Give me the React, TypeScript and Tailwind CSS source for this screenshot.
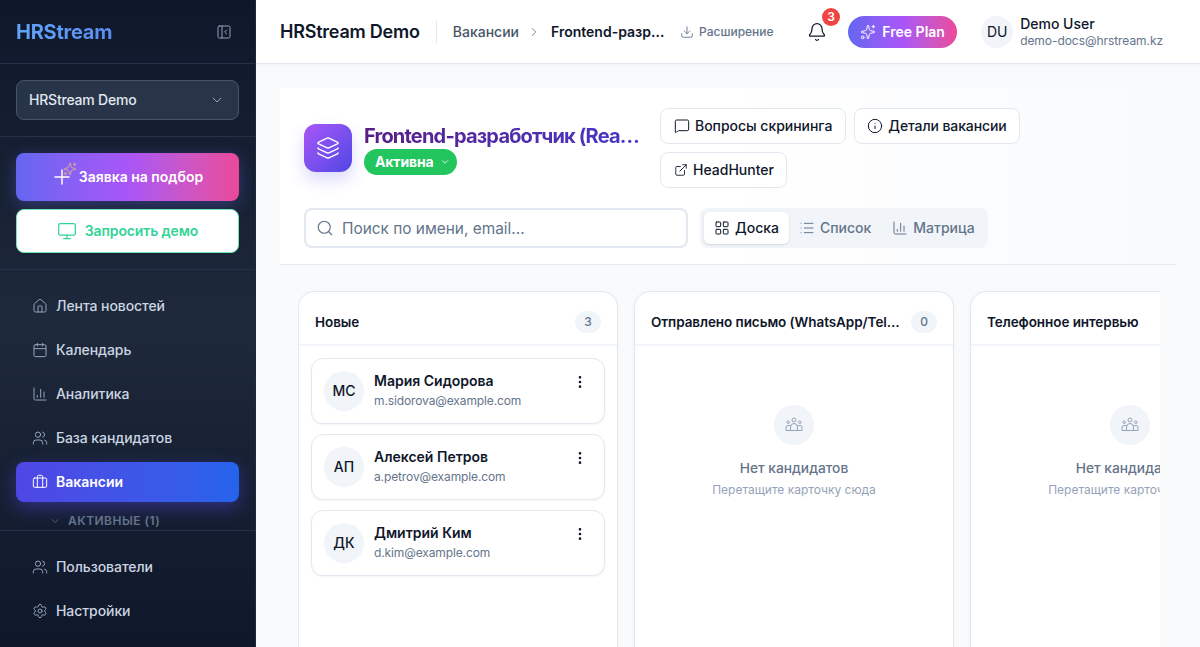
import React from "react";
import {
  PanelLeftClose, ChevronDown, ChevronRight, Plus, Sparkles, Monitor, House, Calendar, ChartColumn, Users, Briefcase, Settings,
  Download, Bell, Layers, MessageSquare, Info, ExternalLink, Search, LayoutGrid, List, MoreVertical,
} from "lucide-react";

const navTop = [
  { label: "Лента новостей", Icon: House },
  { label: "Календарь", Icon: Calendar },
  { label: "Аналитика", Icon: ChartColumn },
  { label: "База кандидатов", Icon: Users },
];

function NavItem({ label, Icon, active }: { label: string; Icon: any; active?: boolean }) {
  return (
    <div
      className={
        active
          ? "h-10 shrink-0 rounded-lg px-4 flex items-center gap-2 text-sm font-semibold text-white bg-gradient-to-r from-[#4f46e5] to-[#2563eb] shadow-[0_6px_18px_rgba(79,70,229,0.45)]"
          : "h-10 shrink-0 rounded-lg px-4 flex items-center gap-2 text-sm font-medium tracking-[-0.005em] text-[#cbd5e1]"
      }
    >
      <Icon size={16} strokeWidth={1.5} className={active ? "text-white" : "text-[#94a3b8]"} />
      <span>{label}</span>
    </div>
  );
}

function Sidebar() {
  return (
    <aside className="w-[256px] h-full shrink-0 flex flex-col bg-gradient-to-b from-[#0f172a] via-[#1e293b] to-[#0f172a] border-r border-[#1e293b]">
      <div className="h-16 shrink-0 flex items-center justify-between pl-4 pr-[23px] border-b border-[#253146]">
        <span className="text-xl font-bold tracking-[-0.012em] bg-gradient-to-r from-[#60a5fa] to-[#5b8def] bg-clip-text text-transparent">HRStream</span>
        <PanelLeftClose size={16} strokeWidth={1.5} className="text-[#94a3b8]" />
      </div>
      <div className="h-[73px] shrink-0 px-4 pt-4 border-b border-[#253146]">
        <div className="h-10 rounded-lg border border-[#475569] bg-[#283548] px-3 flex items-center justify-between text-sm font-medium tracking-[-0.015em] text-[#e2e8f0]">
          <span>HRStream Demo</span>
          <ChevronDown size={16} strokeWidth={1.5} className="text-[#94a3b8] mr-[1px]" />
        </div>
      </div>
      <div className="h-[133px] shrink-0 px-4 pt-4 flex flex-col gap-2 border-b border-[#253146]">
        <div className="h-12 shrink-0 rounded-lg bg-gradient-to-r from-[#6366f1] via-[#a855f7] to-[#ec4899] shadow-[0_4px_16px_rgba(99,102,241,0.35)] flex items-center justify-center gap-[5px] text-sm font-semibold text-white">
          <span className="relative w-[22px] h-5">
            <Plus size={24} strokeWidth={1.5} className="text-white absolute left-[-2px] top-[-2px]" />
            <Sparkles size={14} strokeWidth={1.5} className="text-[#e0b48c] absolute left-[11px] top-[-5px]" />
          </span>
          <span>Заявка на подбор</span>
        </div>
        <div className="h-11 shrink-0 rounded-lg bg-white border border-[#6ee7b7] flex items-center justify-center gap-2 text-sm font-semibold tracking-[-0.01em] text-[#34d399]">
          <Monitor size={20} strokeWidth={1.5} />
          <span>Запросить демо</span>
        </div>
      </div>
      <div className="flex-1 min-h-0 overflow-hidden px-4 pt-4 flex flex-col gap-1">
        {navTop.map((n) => (
          <NavItem key={n.label} {...n} />
        ))}
        <NavItem label="Вакансии" Icon={Briefcase} active />
        <div className="shrink-0 flex items-center gap-[7px] pl-[33px] h-6 mt-[3px] text-xs font-semibold tracking-[0.04em] text-[#64748b]">
          <ChevronDown size={12} strokeWidth={1.5} />
          <span>АКТИВНЫЕ (1)</span>
        </div>
      </div>
      <div className="shrink-0 h-[117px] border-t border-[#253146] px-4 pt-4 flex flex-col gap-1">
        <NavItem label="Пользователи" Icon={Users} />
        <NavItem label="Настройки" Icon={Settings} />
      </div>
    </aside>
  );
}

function Header() {
  return (
    <header className="h-16 shrink-0 bg-white border-b border-[#e2e8f0] shadow-[0_1px_3px_rgba(15,23,42,0.04)] flex items-center justify-between pl-6 pr-[37px]">
      <div className="flex items-center">
        <span className="text-lg font-semibold tracking-[-0.0125em] text-[#0f172a] whitespace-nowrap">HRStream Demo</span>
        <span className="w-px h-6 bg-[#e2e8f0] ml-4 mr-4" />
        <span className="text-sm font-medium text-[#475569]">Вакансии</span>
        <ChevronRight size={14} strokeWidth={1.5} className="text-[#64748b] ml-[8px] mr-[10px]" />
        <span className="text-sm font-semibold text-[#0f172a] w-[114px] truncate">Frontend-разработчик</span>
        <span className="ml-[15px] flex items-center gap-[5px] text-xs font-medium text-[#64748b]">
          <Download size={14} strokeWidth={1.5} />
          Расширение
        </span>
      </div>
      <div className="flex items-center">
        <span className="relative mr-[21px]">
          <Bell size={20} strokeWidth={1.5} className="text-[#0f172a]" />
          <span className="absolute -top-[14px] left-[15px] w-[18px] h-[18px] rounded-full bg-[#ef4444] text-white text-xs font-semibold flex items-center justify-center">3</span>
        </span>
        <span className="h-8 w-[109px] rounded-full bg-gradient-to-r from-[#6366f1] via-[#a855f7] to-[#ec4899] flex items-center justify-center gap-[6px] text-sm font-semibold text-white">
          <Sparkles size={16} strokeWidth={1.5} />
          Free Plan
        </span>
        <span className="ml-6 w-8 h-8 rounded-full bg-[#f1f5f9] text-sm text-[#0f172a] flex items-center justify-center">DU</span>
        <span className="ml-[7px] flex flex-col">
          <span className="text-sm font-medium text-[#0f172a] leading-[17px]">Demo User</span>
          <span className="text-xs tracking-[-0.005em] text-[#64748b] leading-[17px]">demo-docs@hrstream.kz</span>
        </span>
      </div>
    </header>
  );
}

function ActionButton({ Icon, label, iconSize = 16, className }: { Icon: any; label: string; iconSize?: number; className: string }) {
  return (
    <div className={"h-9 rounded-lg border border-[#e2e8f0] bg-white flex items-center gap-[5px] text-sm font-medium text-[#0f172a] whitespace-nowrap " + className}>
      <Icon size={iconSize} strokeWidth={1.5} />
      <span>{label}</span>
    </div>
  );
}

function Tab({ Icon, label, active, className = "" }: { Icon: any; label: string; active?: boolean; className?: string }) {
  return (
    <div
      className={
        (active
          ? "h-8 px-[10px] rounded-md bg-white shadow-sm flex items-center gap-[5px] text-sm font-medium text-[#0f172a] "
          : "h-8 px-[10px] rounded-md flex items-center gap-[5px] text-sm font-medium text-[#64748b] ") + className
      }
    >
      <Icon size={16} strokeWidth={1.5} />
      <span>{label}</span>
    </div>
  );
}

function Candidate({ initials, name, email }: { initials: string; name: string; email: string }) {
  return (
    <div className="h-[66px] shrink-0 rounded-xl border border-[#e2e8f0] bg-white shadow-[0_1px_2px_rgba(15,23,42,0.05)] pl-3 pr-4 flex items-center">
      <span className="w-10 h-10 shrink-0 rounded-full bg-[#f1f5f9] text-sm font-medium text-[#0f172a] flex items-center justify-center">{initials}</span>
      <div className="ml-[10px] flex-1 min-w-0 flex flex-col">
        <span className="text-sm font-semibold text-[#0f172a] leading-5">{name}</span>
        <span className="text-xs tracking-[-0.01em] text-[#64748b] leading-5">{email}</span>
      </div>
      <MoreVertical size={16} strokeWidth={2} className="text-[#0f172a] self-start mt-[15px]" />
    </div>
  );
}

function TeamIcon() {
  return (
    <svg width="18" height="18" viewBox="0 0 18 18" fill="none" stroke="#94a3b8" strokeWidth="1">
      <circle cx="9" cy="4" r="2" />
      <circle cx="3.2" cy="6.2" r="1.3" />
      <circle cx="14.8" cy="6.2" r="1.3" />
      <path d="M5.5 14.5V11a3.5 3.5 0 0 1 7 0v3.5z" />
      <path d="M5.5 14.5H1V11.5a2 2 0 0 1 2-2h2.5" />
      <path d="M12.5 14.5H17V11.5a2 2 0 0 0-2-2h-2.5" />
    </svg>
  );
}

function Column({ title, count, children }: { title: string; count?: string; children?: React.ReactNode }) {
  return (
    <div className="w-[320px] h-[420px] shrink-0 rounded-t-2xl border border-[#e2e8f0] bg-white shadow-[0_1px_3px_rgba(15,23,42,0.05)] flex flex-col">
      <div className="h-[54px] shrink-0 border-b-2 border-[#f1f5f9] pt-2 pl-4 pr-4 flex items-center justify-between gap-2">
        <span className="text-[13.5px] font-semibold tracking-[-0.005em] text-[#0f172a] truncate">{title}</span>
        {count && (
          <span className="w-[26px] h-[22px] shrink-0 rounded-full bg-[#f1f5f9] text-xs font-medium text-[#64748b] flex items-center justify-center">{count}</span>
        )}
      </div>
      {children}
    </div>
  );
}

function Empty() {
  return (
    <div className="pt-[59px] flex flex-col items-center">
      <span className="w-10 h-10 rounded-full bg-[#f1f5f9] flex items-center justify-center">
        <TeamIcon />
      </span>
      <span className="mt-[13px] text-[13.75px] font-medium text-[#64748b] leading-5 whitespace-nowrap">Нет кандидатов</span>
      <span className="mt-[2px] text-xs text-[#94a3b8] leading-5 whitespace-nowrap">Перетащите карточку сюда</span>
    </div>
  );
}

export default function App() {
  return (
    <div className="h-screen w-full overflow-hidden flex bg-[#f8fafc] font-['Inter',sans-serif]">
      <Sidebar />
      <div className="flex-1 min-w-0 h-full flex flex-col">
        <Header />
        <main className="flex-1 min-h-0 overflow-hidden p-6">
          <section className="h-[177px] border-b border-[#e2e8f0] bg-gradient-to-r from-white via-white via-50% to-transparent px-6 pt-5 flex flex-col">
            <div className="flex items-center h-20 shrink-0">
              <span className="w-12 h-12 shrink-0 rounded-xl bg-gradient-to-br from-[#a855f7] to-[#4f46e5] shadow-[0_8px_16px_rgba(79,70,229,0.2)] text-white flex items-center justify-center">
                <Layers size={24} strokeWidth={1.5} />
              </span>
              <div className="ml-3 w-[278px] pt-[1px] flex flex-col items-start">
                <span className="w-full text-xl font-bold tracking-[-0.04em] leading-[26px] truncate bg-gradient-to-r from-[#581c87] to-[#4338ca] bg-clip-text text-transparent">Frontend-разработчик (React)</span>
                <span className="h-[26px] pl-[11px] pr-[7px] rounded-full bg-[#22c55e] text-white text-sm font-bold tracking-[-0.01em] flex items-center gap-[6px]">
                  Активна
                  <ChevronDown size={10} strokeWidth={2} />
                </span>
              </div>
              <div className="ml-[18px] w-[370px] flex flex-wrap gap-x-2 gap-y-2">
                <ActionButton Icon={MessageSquare} label="Вопросы скрининга" className="px-[13px] tracking-[-0.002em]" />
                <ActionButton Icon={Info} label="Детали вакансии" className="px-[12px] tracking-[-0.008em]" />
                <ActionButton Icon={ExternalLink} label="HeadHunter" iconSize={14} className="pl-[13px] pr-[12px]" />
              </div>
            </div>
            <div className="mt-5 flex items-center gap-3">
              <div className="w-[384px] h-10 rounded-lg border-2 border-[#e2e8f0] bg-white pl-[10px] flex items-center gap-2 text-[15.4px] text-[#64748b]">
                <Search size={18} strokeWidth={1.5} />
                <span className="pt-[1px]">Поиск по имени, email...</span>
              </div>
              <div className="h-10 rounded-lg bg-[#f1f5f9] p-1 flex items-center">
                <Tab Icon={LayoutGrid} label="Доска" active />
                <Tab Icon={List} label="Список" />
                <Tab Icon={ChartColumn} label="Матрица" className="ml-[1px] pr-[9px]" />
              </div>
            </div>
          </section>
          <div className="mt-[26px] ml-[18px] w-[862px] overflow-hidden flex gap-4">
            <Column title="Новые" count="3">
              <div className="p-3 flex flex-col gap-[10px]">
                <Candidate initials="МС" name="Мария Сидорова" email="m.sidorova@example.com" />
                <Candidate initials="АП" name="Алексей Петров" email="a.petrov@example.com" />
                <Candidate initials="ДК" name="Дмитрий Ким" email="d.kim@example.com" />
              </div>
            </Column>
            <Column title="Отправлено письмо (WhatsApp/Telegram)" count="0">
              <Empty />
            </Column>
            <Column title="Телефонное интервью" count="0">
              <Empty />
            </Column>
          </div>
        </main>
      </div>
    </div>
  );
}
